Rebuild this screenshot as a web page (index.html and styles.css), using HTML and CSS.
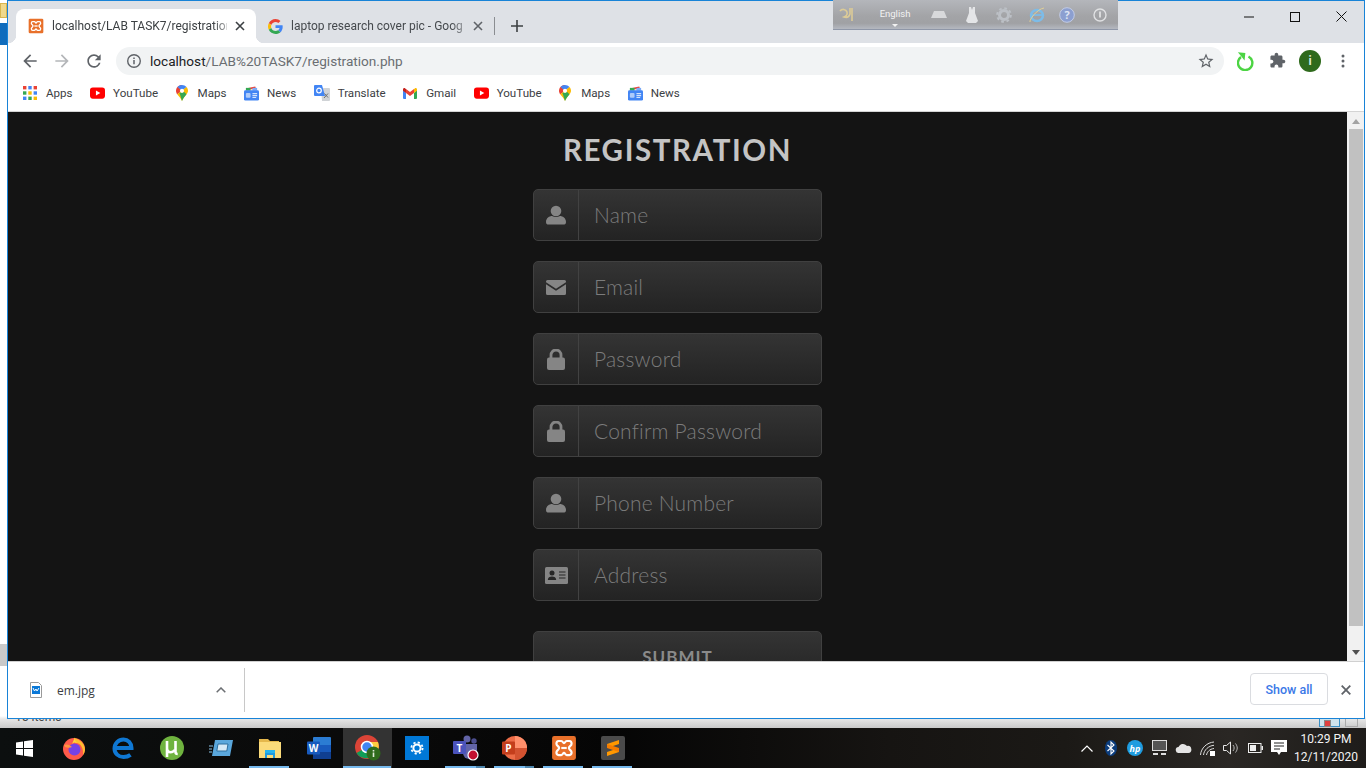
FILE: index.html
```html
<!DOCTYPE html>
<html lang="en">
<head>
<meta charset="utf-8">
<title>Registration</title>
<link rel="stylesheet" href="styles.css">
</head>
<body>
<svg class="defs" width="0" height="0" aria-hidden="true">
  <symbol id="xampp" viewBox="0 0 24 24">
    <rect x="1" y="1" width="22" height="22" rx="2" fill="#e8702a"/>
    <path d="M7 5.500h2.500c1.500 0 1.500 2 2.500 2s1-2 2.500-2H17c1.700 0 2 1.500 2 2.500 0 2-2.500 2.500-2.500 4s2.500 2 2.500 4c0 1-.3 2.500-2 2.500h-2.500c-1.500 0-1.500-2-2.500-2s-1 2-2.500 2H7c-1.700 0-2-1.500-2-2.500 0-2 2.500-2.500 2.500-4S5 10 5 8c0-1 .3-2.500 2-2.500z" fill="none" stroke="#fff" stroke-width="2"/>
    <rect x="9.500" y="11" width="5" height="2" fill="#fff"/>
  </symbol>
  <symbol id="google" viewBox="0 0 48 48">
    <path fill="#EA4335" d="M24 9.500c3.540 0 6.710 1.220 9.210 3.600l6.850-6.850C35.900 2.380 30.470 0 24 0 14.620 0 6.510 5.380 2.560 13.220l7.980 6.190C12.430 13.720 17.740 9.500 24 9.500z"/>
    <path fill="#4285F4" d="M46.980 24.550c0-1.570-.15-3.090-.38-4.550H24v9.020h12.940c-.58 2.960-2.260 5.480-4.780 7.180l7.730 6c4.510-4.180 7.090-10.360 7.090-17.65z"/>
    <path fill="#FBBC05" d="M10.530 28.590c-.48-1.450-.76-2.990-.76-4.590s.27-3.140.76-4.590l-7.980-6.190C.92 16.460 0 20.120 0 24c0 3.880.92 7.540 2.560 10.780l7.970-6.190z"/>
    <path fill="#34A853" d="M24 48c6.480 0 11.930-2.130 15.890-5.810l-7.730-6c-2.150 1.450-4.920 2.300-8.160 2.300-6.260 0-11.570-4.220-13.470-9.910l-7.980 6.190C6.510 42.620 14.620 48 24 48z"/>
  </symbol>
  <symbol id="youtube" viewBox="0 0 16 12">
    <rect width="16" height="12" rx="3" fill="#f00"/>
    <path d="M6.300 3.300L11 6 6.300 8.700z" fill="#fff"/>
  </symbol>
  <symbol id="maps" viewBox="0 0 12 16">
    <path d="M6 0C2.700 0 0 2.600 0 5.800c0 1.300.5 2.500 1.200 3.400L6 6z" fill="#e94235"/>
    <path d="M6 0c-1.800 0-3.400.8-4.500 2L6 6l4.500-4C9.400.8 7.800 0 6 0z" fill="#4285f4"/>
    <path d="M10.500 2L1.200 9.200C2.700 11.300 4.800 13 6 16c1.200-3 3-4.800 4.500-6.700.9-1 1.500-2.200 1.500-3.500 0-1.500-.6-2.800-1.500-3.800z" fill="#fbbc04"/>
    <path d="M3.400 7.700L6 16c1.200-3 3-4.800 4.500-6.700L8.200 7z" fill="#34a853"/>
    <circle cx="6" cy="5.800" r="2.100" fill="#fff"/>
  </symbol>
  <symbol id="news" viewBox="0 0 16 15">
    <path d="M3 2l9-2 1 3H3z" fill="#e8453c"/>
    <path d="M9 1.500h5v3H9z" fill="#7baaf7"/>
    <path d="M2 1.500h5v3H2z" fill="#34a853"/>
    <rect y="4" width="16" height="11" rx="1.500" fill="#4285f4"/>
    <rect x="2" y="7" width="5" height="5" rx="1" fill="#aecbfa"/>
    <path d="M9 7h5v1.300H9zM9 9.200h5v1.300H9zM9 11.200h4v1H9z" fill="#d2e3fc"/>
  </symbol>
  <symbol id="translate" viewBox="0 0 16 16">
    <path d="M7 3h8a1 1 0 011 1v11a1 1 0 01-1 1H8z" fill="#d0d3d6"/>
    <path d="M1 0h7l3 11H1a1 1 0 01-1-1V1a1 1 0 011-1z" fill="#4285f4"/>
    <circle cx="5" cy="5.500" r="2.300" fill="none" stroke="#fff" stroke-width="1.200"/>
    <path d="M10.500 8.500l3.500 4M14 8.500l-4 4.500" stroke="#6b6f73" stroke-width="1"/>
  </symbol>
  <symbol id="gmail" viewBox="0 0 14 11">
    <path d="M0 1.500v8.500a1 1 0 001 1h2V5z" fill="#4285f4"/>
    <path d="M14 1.500v8.500a1 1 0 01-1 1h-2V5z" fill="#34a853"/>
    <path d="M3 5V1L7 4l4-3v4L7 8z" fill="#ea4335"/>
    <path d="M0 1.500C0 .3 1.300-.3 2.200.4L3 1v4L0 2.800z" fill="#c5221f"/>
    <path d="M14 1.500c0-1.200-1.300-1.800-2.200-1.100L11 1v4l3-2.200z" fill="#fbbc04"/>
  </symbol>
  <symbol id="user" viewBox="0 0 20 20">
    <circle cx="10" cy="6" r="5.300" fill="#858585"/>
    <path d="M0 17c0-4 3.500-6 6-6 1.300.6 2.600.9 4 .9s2.700-.3 4-.9c2.500 0 6 2 6 6 0 2-1 2.500-2.500 2.500h-15C1 19.500 0 19 0 17z" fill="#858585"/>
  </symbol>
  <symbol id="lock" viewBox="0 0 18 21">
    <path d="M4 9V6a5 5 0 0110 0v3" fill="none" stroke="#858585" stroke-width="2.800"/>
    <rect y="8.500" width="18" height="12.500" rx="2" fill="#858585"/>
  </symbol>
</svg>

<div class="screen">
  <div class="desktop">
    <div class="back-window">
      <span class="back-folder"></span>
      <span class="back-ribbon"></span>
      <span class="back-grey"></span>
      <span class="back-status">15 items</span>
      <span class="back-view back-view-on"></span>
      <span class="back-view back-view-off"></span>
    </div>

    <div class="window">
      <div class="tabstrip">
        <div class="tab tab-active">
          <svg class="fav" width="16" height="16"><use href="#xampp"/></svg>
          <span class="tab-title">localhost/LAB TASK7/registration</span>
          <svg class="tab-x" width="10" height="10" viewBox="0 0 10 10"><path d="M1 1l8 8M9 1L1 9" stroke="#3c4043" stroke-width="1.600"/></svg>
        </div>
        <div class="tab tab-idle">
          <svg class="fav" width="15" height="15"><use href="#google"/></svg>
          <span class="tab-title">laptop research cover pic - Goog</span>
          <svg class="tab-x" width="10" height="10" viewBox="0 0 10 10"><path d="M1 1l8 8M9 1L1 9" stroke="#5f6368" stroke-width="1.600"/></svg>
        </div>
        <span class="tab-sep"></span>
        <svg class="tab-new" width="12" height="12" viewBox="0 0 12 12"><path d="M6 0v12M0 6h12" stroke="#3c4043" stroke-width="1.600"/></svg>
        <div class="win-controls">
          <svg width="10" height="10" viewBox="0 0 10 10"><path d="M0 5h10" stroke="#111" stroke-width="1"/></svg>
          <svg width="10" height="10" viewBox="0 0 10 10"><rect x=".5" y=".5" width="9" height="9" fill="none" stroke="#111" stroke-width="1"/></svg>
          <svg width="11" height="11" viewBox="0 0 11 11"><path d="M.5.500l10 10M10.500.500l-10 10" stroke="#111" stroke-width="1"/></svg>
        </div>
      </div>

      <div class="toolbar">
        <svg class="tool" width="20" height="20" viewBox="0 0 24 24"><path fill="#5f6368" d="M20 11H7.830l5.590-5.590L12 4l-8 8 8 8 1.410-1.410L7.830 13H20v-2z"/></svg>
        <svg class="tool" width="20" height="20" viewBox="0 0 24 24"><path fill="#b4b6b9" d="M12 4l-1.410 1.410L16.170 11H4v2h12.170l-5.580 5.590L12 20l8-8z"/></svg>
        <svg class="tool" width="20" height="20" viewBox="0 0 24 24"><path fill="#5f6368" d="M17.650 6.350A7.958 7.958 0 0012 4c-4.420 0-7.990 3.580-7.990 8s3.570 8 7.990 8c3.730 0 6.840-2.550 7.730-6h-2.080A5.990 5.990 0 0112 18c-3.310 0-6-2.690-6-6s2.690-6 6-6c1.660 0 3.140.69 4.220 1.780L13 11h7V4l-2.350 2.350z"/></svg>
        <div class="omnibox">
          <svg class="info" width="16" height="16" viewBox="0 0 16 16"><circle cx="8" cy="8" r="6.300" fill="none" stroke="#5f6368" stroke-width="1.400"/><path d="M8 7v4.300M8 4.500v1.400" stroke="#5f6368" stroke-width="1.500"/></svg>
          <span class="url"><span class="url-host">localhost</span>/LAB%20TASK7/registration.php</span>
          <svg class="star" width="18" height="18" viewBox="0 0 24 24"><path fill="#5f6368" d="M22 9.240l-7.190-.62L12 2 9.190 8.630 2 9.240l5.460 4.730L5.820 21 12 17.270 18.180 21l-1.630-7.030L22 9.240zM12 15.400l-3.760 2.270 1-4.280-3.320-2.880 4.380-.38L12 6.100l1.710 4.040 4.380.38-3.320 2.880 1 4.280L12 15.400z"/></svg>
        </div>
        <svg class="ext-sync" width="18" height="20" viewBox="0 0 18 20"><path d="M4 6a7.200 7.200 0 107.500-.5" fill="none" stroke="#4cd443" stroke-width="2.400"/><path d="M.5 1.500h7.500v7.500z" fill="#4cd443" transform="rotate(6 4 5)"/></svg>
        <svg class="ext-puzzle" width="17" height="17" viewBox="0 0 24 24"><path fill="#5f6368" d="M20.500 11H19V7c0-1.100-.9-2-2-2h-4V3.500C13 2.120 11.880 1 10.500 1S8 2.120 8 3.500V5H4c-1.100 0-1.990.9-1.990 2v3.800H3.500c1.490 0 2.700 1.210 2.700 2.700s-1.210 2.700-2.700 2.700H2V20c0 1.100.9 2 2 2h3.800v-1.500c0-1.490 1.210-2.700 2.700-2.700 1.490 0 2.700 1.210 2.700 2.700V22H17c1.100 0 2-.9 2-2v-4h1.500c1.380 0 2.500-1.120 2.500-2.500S21.880 11 20.500 11z"/></svg>
        <span class="avatar">i</span>
        <svg class="menu" width="4" height="14" viewBox="0 0 4 14"><circle cx="2" cy="2" r="1.500" fill="#5f6368"/><circle cx="2" cy="7" r="1.500" fill="#5f6368"/><circle cx="2" cy="12" r="1.500" fill="#5f6368"/></svg>
      </div>

      <div class="bookmarks">
        <a class="bm bm-apps">
          <svg width="14" height="14" viewBox="0 0 14 14">
            <rect width="3.400" height="3.400" fill="#ea4335"/><rect x="5.300" width="3.400" height="3.400" fill="#4285f4"/><rect x="10.600" width="3.400" height="3.400" fill="#ea4335"/>
            <rect y="5.300" width="3.400" height="3.400" fill="#34a853"/><rect x="5.300" y="5.300" width="3.400" height="3.400" fill="#fbbc04"/><rect x="10.600" y="5.300" width="3.400" height="3.400" fill="#4285f4"/>
            <rect y="10.600" width="3.400" height="3.400" fill="#4285f4"/><rect x="5.300" y="10.600" width="3.400" height="3.400" fill="#34a853"/><rect x="10.600" y="10.600" width="3.400" height="3.400" fill="#fbbc04"/>
          </svg>
          <span>Apps</span>
        </a>
        <a class="bm"><svg width="15" height="12"><use href="#youtube"/></svg><span>YouTube</span></a>
        <a class="bm bm-maps"><svg width="12" height="16"><use href="#maps"/></svg><span>Maps</span></a>
        <a class="bm"><svg width="15" height="15"><use href="#news"/></svg><span>News</span></a>
        <a class="bm"><svg width="16" height="16"><use href="#translate"/></svg><span>Translate</span></a>
        <a class="bm bm-apps"><svg width="14" height="11"><use href="#gmail"/></svg><span>Gmail</span></a>
        <a class="bm"><svg width="15" height="12"><use href="#youtube"/></svg><span>YouTube</span></a>
        <a class="bm bm-maps"><svg width="12" height="16"><use href="#maps"/></svg><span>Maps</span></a>
        <a class="bm"><svg width="15" height="15"><use href="#news"/></svg><span>News</span></a>
      </div>

      <div class="viewport">
        <main class="page">
          <h1 class="title">REGISTRATION</h1>
          <form class="form">
            <div class="field">
              <span class="field-icon"><svg width="20" height="20"><use href="#user"/></svg></span>
              <span class="field-text">Name</span>
            </div>
            <div class="field">
              <span class="field-icon"><svg width="20" height="15" viewBox="0 0 20 15"><path d="M1.500 0h17A1.500 1.500 0 0120 1.500v.7l-10 6.500L0 2.200v-.7A1.500 1.500 0 011.500 0z" fill="#858585"/><path d="M0 4.200l10 6.500 10-6.500v9.300a1.500 1.500 0 01-1.500 1.500h-17A1.500 1.500 0 010 13.500z" fill="#858585"/></svg></span>
              <span class="field-text">Email</span>
            </div>
            <div class="field">
              <span class="field-icon"><svg width="18" height="21"><use href="#lock"/></svg></span>
              <span class="field-text">Password</span>
            </div>
            <div class="field">
              <span class="field-icon"><svg width="18" height="21"><use href="#lock"/></svg></span>
              <span class="field-text">Confirm Password</span>
            </div>
            <div class="field">
              <span class="field-icon"><svg width="20" height="20"><use href="#user"/></svg></span>
              <span class="field-text">Phone Number</span>
            </div>
            <div class="field">
              <span class="field-icon"><svg width="23" height="17" viewBox="0 0 23 17"><rect width="23" height="17" rx="1.500" fill="#858585"/><circle cx="7" cy="6" r="2.500" fill="#262626"/><path d="M2.800 13c0-2.500 1.800-3.500 4.200-3.500s4.200 1 4.200 3.500z" fill="#262626"/><path d="M14 5h6.500M14 8h6.500M14 11h6.500" stroke="#262626" stroke-width="1.200"/></svg></span>
              <span class="field-text">Address</span>
            </div>
            <button class="submit" type="button">SUBMIT</button>
          </form>
        </main>
        <div class="scrollbar">
          <span class="arrow arrow-up"></span>
          <span class="thumb"></span>
          <span class="arrow arrow-down"></span>
        </div>
      </div>

      <div class="shelf">
        <div class="shelf-item">
          <svg width="12" height="16" viewBox="0 0 12 16"><path d="M.5.500h8l3 3v12H.5z" fill="#fff" stroke="#9a9a9a"/><rect x="2" y="4" width="8" height="8" fill="#0a78d7"/><path d="M3 6l1.500 3L6 7l1 2 2-3" fill="none" stroke="#fff" stroke-width="1"/></svg>
          <span class="file-name">em.jpg</span>
          <svg class="file-chev" width="10" height="6" viewBox="0 0 10 6"><path d="M.7 5.300L5 1l4.300 4.300" fill="none" stroke="#6b6e72" stroke-width="1.500"/></svg>
        </div>
        <button class="show-all" type="button">Show all</button>
        <svg class="shelf-x" width="10" height="10" viewBox="0 0 10 10"><path d="M.7.700l8.600 8.600M9.300.700L.7 9.300" stroke="#5f6368" stroke-width="1.800"/></svg>
      </div>
    </div>

    <div class="langbar">
      <svg width="16" height="14" viewBox="0 0 16 14"><path d="M1 3c2-2.500 6-2 7 1 .5 2-.5 4-3 5 3 1 5 0 6-3V0m2 0v13" fill="none" stroke="#dccb97" stroke-width="1.600"/></svg>
      <span class="lang-name">English</span>
      <svg width="16" height="8" viewBox="0 0 16 8"><path d="M3 0h10l3 7H0z" fill="#d8d9db"/></svg>
      <svg width="12" height="16" viewBox="0 0 12 16"><path d="M3 0h2l1 3 1-3h2v6l3 8-2 2H2l-2-2 3-8z" fill="#e4e5e7"/></svg>
      <svg width="16" height="16" viewBox="0 0 16 16"><circle cx="8" cy="8" r="4.500" fill="none" stroke="#bcc0c6" stroke-width="3"/><circle cx="8" cy="8" r="6.800" fill="none" stroke="#bcc0c6" stroke-width="2" stroke-dasharray="2.700 2.650"/></svg>
      <svg width="16" height="16" viewBox="0 0 16 16"><ellipse cx="8" cy="8.500" rx="6" ry="5.500" fill="none" stroke="#7dbce8" stroke-width="2.500"/><path d="M3 8h10" stroke="#7dbce8" stroke-width="1.800"/><path d="M1 15C0 13 8 2 15 1" fill="none" stroke="#e0d096" stroke-width="1"/></svg>
      <svg width="16" height="16" viewBox="0 0 16 16"><circle cx="8" cy="8" r="7.300" fill="#8c9fd0" stroke="#c2cce6"/><text x="8" y="12" class="lang-q">?</text></svg>
      <svg width="14" height="14" viewBox="0 0 14 14"><circle cx="7" cy="7" r="6" fill="none" stroke="#e0e1e3" stroke-width="1.400"/><path d="M7 3.500v6" stroke="#e0e1e3" stroke-width="1.800"/></svg>
      <span class="lang-caret"></span>
    </div>
  </div>

  <footer class="taskbar">
    <div class="start">
      <svg width="17" height="17" viewBox="0 0 17 17"><path d="M0 2.400L7 1.400v6.600H0zM8 1.300L17 0v8H8zM0 9h7v6.600L0 14.600zM8 9h9v8l-9-1.300z" fill="#fff"/></svg>
    </div>
    <div class="task">
      <svg width="24" height="24" viewBox="0 0 24 24"><circle cx="12" cy="13" r="11" fill="#ff5a4a"/><path d="M12 2c5 1 11 5 11 12a11 11 0 01-2 5C22 12 18 6 13 7z" fill="#ffbd2e"/><path d="M13 1c-1 3 1 5 3 6-3-1-5 0-6 1z" fill="#ffd43a"/><circle cx="12.500" cy="13.500" r="6" fill="#7542e5"/><path d="M2 9c2-1 5-1 8 2-2 1-5 1-7 0z" fill="#ff9640"/></svg>
    </div>
    <div class="task">
      <svg width="22" height="22" viewBox="0 0 22 22"><path d="M3.500 11h16c0-5-3.500-8.500-8-8.500-5 0-9 4-9 9 0 5 4 8.500 9 8.500 3 0 5-.7 7-2.200" fill="none" stroke="#0f78d4" stroke-width="4"/></svg>
    </div>
    <div class="task">
      <svg width="24" height="24" viewBox="0 0 24 24"><circle cx="12" cy="12" r="12" fill="#6fb33f"/><path d="M7 5v16M7 6v6c0 3 1.800 4.200 3.800 4.200s3-1 4-2.200M15.500 5v11c0 1.400.8 2 2.200 2" fill="none" stroke="#fff" stroke-width="2.600"/></svg>
    </div>
    <div class="task">
      <svg width="24" height="18" viewBox="0 0 24 18"><path d="M6 1h18l-3 16H3z" fill="#5aa7dc"/><path d="M9 5h10l-1.200 7H7.800z" fill="#d5e9f6" stroke="#2c6e9e"/><path d="M0 7h4M0 10h3M0 13h3" stroke="#8cc4e8"/></svg>
    </div>
    <div class="task task-open">
      <svg width="22" height="20" viewBox="0 0 22 20"><path d="M0 1h9l2 2h9v3H0z" fill="#e5b84c"/><rect y="4" width="22" height="16" fill="#fbdb7a"/><path d="M6 15h10v5h-2v-3H8v3H6z" fill="#1f9be0"/><rect x="6" y="12" width="10" height="3" fill="#27b4ec"/></svg>
    </div>
    <div class="task">
      <svg width="24" height="22" viewBox="0 0 24 22"><rect x="6" y="0" width="18" height="22" rx="1" fill="#2b7cd3"/><rect x="6" y="15" width="18" height="7" fill="#103f91"/><rect x="6" y="8" width="18" height="7" fill="#185abd"/><rect y="4.500" width="13" height="13" rx="1" fill="#185abd"/><text x="6.500" y="15" class="word-w">W</text></svg>
    </div>
    <div class="task task-active">
      <svg width="26" height="26" viewBox="0 0 26 26"><circle cx="12" cy="12" r="12" fill="#db4437"/><path d="M12 12L1.600 18a12 12 0 0017 3z" fill="#0f9d58"/><path d="M12 12l6.600 9A12 12 0 0023 7H12z" fill="#ffcd40"/><circle cx="12" cy="12" r="5.500" fill="#4285f4" stroke="#fff" stroke-width="1.500"/><circle cx="18.500" cy="18.500" r="7" fill="#2f6a1c"/><path d="M18.500 15v1.400M18.500 17.500v4.500" stroke="#dfe9d8" stroke-width="1.600"/></svg>
    </div>
    <div class="task">
      <svg width="24" height="24" viewBox="0 0 24 24"><rect width="24" height="24" fill="#0078d7"/><circle cx="12" cy="12" r="3.600" fill="none" stroke="#fff" stroke-width="2"/><circle cx="12" cy="12" r="5.600" fill="none" stroke="#fff" stroke-width="1.800" stroke-dasharray="2.200 2.200"/></svg>
    </div>
    <div class="task task-open task-stack">
      <svg width="26" height="26" viewBox="0 0 26 26"><circle cx="14" cy="4" r="3.500" fill="#6264a7"/><circle cx="21" cy="6" r="2.700" fill="#4b4d8e"/><path d="M10 9h14v9a6 6 0 01-6 6h-2a6 6 0 01-6-6z" fill="#6264a7"/><rect y="6" width="13" height="13" rx="1" fill="#4b53bc"/><text x="6.500" y="16.500" class="teams-t">T</text><circle cx="20" cy="20" r="5" fill="#c4102f" stroke="#fff" stroke-width="1.200"/></svg>
    </div>
    <div class="task task-open task-stack">
      <svg width="25" height="24" viewBox="0 0 25 24"><circle cx="13" cy="12" r="12" fill="#ed6c47"/><path d="M13 0a12 12 0 0112 12H13z" fill="#ff8f6b"/><path d="M13 12h12a12 12 0 01-12 12z" fill="#d35230"/><rect y="5.500" width="13" height="13" rx="1" fill="#c43e1c"/><text x="6.500" y="16" class="ppt-p">P</text></svg>
    </div>
    <div class="task task-open">
      <svg width="26" height="26"><use href="#xampp"/></svg>
    </div>
    <div class="task task-open">
      <svg width="24" height="24" viewBox="0 0 24 24"><rect width="24" height="24" rx="2" fill="#4a4a4a"/><path d="M18 4L6 8v4l12-4zM18 12L6 16v4l12-4z" fill="#ff9800"/><path d="M6 8l12 4v4L6 12z" fill="#f57c00"/></svg>
    </div>

    <div class="tray">
      <span class="tray-ico"><svg width="12" height="7" viewBox="0 0 12 7"><path d="M.5 6.500L6 1l5.500 5.500" fill="none" stroke="#fff" stroke-width="1.200"/></svg></span>
      <span class="tray-ico"><svg width="12" height="16" viewBox="0 0 12 16"><ellipse cx="6" cy="8" rx="6" ry="8" fill="#0b3c7c"/><path d="M2.500 5l6.500 6-3 3V2l3 3-6.500 6" fill="none" stroke="#fff" stroke-width="1.100"/></svg></span>
      <span class="tray-ico"><svg width="16" height="16" viewBox="0 0 16 16"><circle cx="8" cy="8" r="8" fill="#1e9ce0"/><text x="8" y="11.500" class="hp">hp</text></svg></span>
      <span class="tray-ico"><svg width="15" height="16" viewBox="0 0 15 16"><rect x=".5" y=".5" width="14" height="10" fill="#555" stroke="#ddd"/><path d="M1 13h5v2H1zM9 13h5v2H9z" fill="#ddd"/></svg></span>
      <span class="tray-ico"><svg width="17" height="10" viewBox="0 0 17 10"><path d="M4 10a3 3 0 01-.5-6A5 5 0 0112 3a3.500 3.500 0 011.500 7z" fill="#e4e4e4"/></svg></span>
      <span class="tray-ico"><svg width="15" height="15" viewBox="0 0 15 15"><path d="M.5 14C1 7 7 1.500 14 1M3.500 14C4 9 8.500 4.800 14 4.300M6.500 14c.5-3 3-6 7.500-6.500" fill="none" stroke="#ddd" stroke-width="1"/><rect x="10" y="10" width="5" height="5" fill="#fff"/></svg></span>
      <span class="tray-ico"><svg width="16" height="14" viewBox="0 0 16 14"><path d="M.5 4.500h3L7.500 1v12l-4-3.500h-3z" fill="none" stroke="#e8e8e8"/><path d="M10 4c1.500 2 1.500 4 0 6M12.500 2.500c2.300 3 2.300 6 0 9" fill="none" stroke="#bbb"/></svg></span>
      <span class="tray-ico"><svg width="15" height="10" viewBox="0 0 15 10"><rect x=".5" y=".5" width="12.500" height="9" fill="none" stroke="#eee"/><rect x="2" y="2" width="6" height="6" fill="#eee"/><rect x="13.500" y="3" width="1.500" height="4" fill="#eee"/></svg></span>
      <span class="tray-ico"><svg width="16" height="16" viewBox="0 0 16 16"><path d="M0 0h16v12h-6l-2 3-2-3H0z" fill="#fff"/><path d="M3 3h10M3 6h10M3 9h6" stroke="#222"/></svg></span>
      <div class="clock"><span>10:29 PM</span><span>12/11/2020</span></div>
    </div>
  </footer>
</div>
</body>
</html>
```

FILE: styles.css
```css
* { box-sizing: border-box; }
html, body { margin: 0; padding: 0; height: 100%; overflow: hidden; }
body { font-family: Roboto, "Open Sans", "Liberation Sans", sans-serif; }
.defs { display: block; height: 0; }

.screen { width: 1366px; height: 768px; display: flex; flex-direction: column; }
.desktop { position: relative; height: 728px; background: #f0f0f0; overflow: hidden; }

/* window behind the browser */
.back-window { position: absolute; inset: 0; background: linear-gradient(#fff, #fff 716px, #e6e6e6 719px, #c9c9c9 728px); }
.back-folder { position: absolute; left: 0; top: 3px; width: 7px; height: 15px; background: #f0d98c; border: 1px solid #d9b64f; }
.back-ribbon { position: absolute; left: 0; top: 23px; width: 7px; height: 22px; background: #0f6cbd; }
.back-grey { position: absolute; left: 0; top: 644px; width: 7px; height: 22px; background: #c9c9c9; }
.back-status { position: absolute; left: 15px; top: 709px; font-size: 12px; line-height: 16px; color: #444; }
.back-view { position: absolute; top: 712px; height: 15px; }
.back-view-on { left: 1319px; width: 21px; background: #cfe3ec; border: 1px solid #3a8fc4; }
.back-view-on::after { content: ""; position: absolute; left: 4px; top: 7px; width: 5px; height: 5px; border: 1px solid #888; background: #e04040; }
.back-view-off { left: 1345px; width: 13px; border: 1px solid #aaa; }

/* browser window */
.window { position: absolute; left: 7px; top: 0; width: 1358px; height: 719px; border: 1px solid #1883d7; background: #fff; display: flex; flex-direction: column; }

.tabstrip { position: relative; height: 42px; flex: none; background: #dee1e6; display: flex; align-items: flex-end; padding-left: 8px; }
.tab { width: 240px; height: 34px; display: flex; align-items: center; padding: 0 11px 0 12px; font-size: 12px; color: #45494d; }
.tab-idle { width: 238px; padding-right: 11px; }
.tab-active { position: relative; background: #fff; border-radius: 8px 8px 0 0; color: #3c4043; }
.tab-active::before, .tab-active::after { content: ""; position: absolute; bottom: 0; width: 8px; height: 8px; }
.tab-active::before { left: -8px; background: radial-gradient(circle at 0 0, transparent 8px, #fff 8.500px); }
.tab-active::after { right: -8px; background: radial-gradient(circle at 100% 0, transparent 8px, #fff 8.500px); }
.fav { flex: none; margin-right: 8px; }
.tab-title { flex: 1; min-width: 0; white-space: nowrap; -webkit-mask-image: linear-gradient(90deg, #000 92%, rgba(0,0,0,.4)); mask-image: linear-gradient(90deg, #000 92%, rgba(0,0,0,.4)); }
.tab-x { flex: none; margin-left: 8px; }
.tab-sep { width: 1px; height: 18px; background: #8a8d91; margin: 0 0 8px 0; }
.tab-new { margin: 0 0 11px 16px; }
.win-controls { margin-left: auto; align-self: flex-start; display: flex; align-items: center; gap: 36px; padding: 10px 17px 0 0; }

.toolbar { height: 35px; flex: none; background: #fff; display: flex; align-items: center; padding: 0 0 0 12px; }
.tool { margin-right: 12px; flex: none; }
.omnibox { width: 1108px; height: 28px; margin-left: 0; background: #f1f3f4; border-radius: 14px; display: flex; align-items: center; padding: 0 9px 0 10px; }
.info { flex: none; margin-right: 8px; }
.url { flex: 1; font-size: 13.600px; color: #6a6e72; white-space: nowrap; }
.url-host { color: #202124; }
.star { flex: none; }
.ext-sync { margin-left: 13px; flex: none; }
.ext-puzzle { margin-left: 14px; flex: none; }
.avatar { width: 22px; height: 22px; margin-left: 13px; border-radius: 50%; background: #2f6a1c; color: #dfe9d8; font-size: 12px; font-weight: 700; display: flex; align-items: center; justify-content: center; flex: none; }
.menu { margin-left: 20px; flex: none; }

.bookmarks { height: 34px; flex: none; padding: 0 0 3px 15px; border-bottom: 1px solid #d4d4d4; background: #fff; display: flex; align-items: center; gap: 17.500px; font-size: 11.600px; color: #3c4043; }
.bm { display: flex; align-items: center; gap: 8px; white-space: nowrap; }
.bm-apps { gap: 9px; }
.bm-maps { gap: 10px; }

.viewport { height: 549px; flex: none; display: flex; overflow: hidden; }
.page { flex: 1; min-width: 0; background: #141414; overflow: hidden; padding-top: 18px; display: flex; flex-direction: column; align-items: center; font-family: Lato, "Liberation Sans", sans-serif; }
.title { margin: 0 0 19px; font-size: 29.500px; line-height: 40px; font-weight: 700; letter-spacing: 1.600px; color: #c4c4c4; }
.form { width: 289px; flex: none; display: flex; flex-direction: column; gap: 20px; }
.field { height: 52px; flex: none; display: flex; border: 1px solid #404040; border-radius: 5px; background: linear-gradient(#343434, #232323); }
.field-icon { width: 45px; flex: none; border-right: 1px solid #424242; display: flex; align-items: center; justify-content: center; }
.field-text { padding-left: 15px; font-size: 21px; line-height: 50px; font-weight: 300; letter-spacing: .2px; color: #7c7c7c; white-space: nowrap; }
.submit { height: 52px; flex: none; margin-top: 10px; border: 1px solid #404040; border-radius: 5px; background: linear-gradient(#343434, #232323); font: 700 17px/50px Lato, "Liberation Sans", sans-serif; letter-spacing: 1px; color: #8a8a8a; padding: 0; }

.scrollbar { width: 17px; flex: none; background: #f1f1f1; display: flex; flex-direction: column; align-items: center; padding: 7px 0 6px; }
.thumb { width: 14px; height: 497px; margin-top: 5px; background: #c1c1c1; }
.arrow { width: 0; height: 0; border-left: 4px solid transparent; border-right: 4px solid transparent; }
.arrow-up { border-bottom: 5px solid #a3a3a3; }
.arrow-down { margin-top: auto; border-top: 5px solid #505050; }

.shelf { height: 57px; flex: none; background: #fff; border-top: 1px solid #d0d0d0; display: flex; align-items: center; padding-right: 13px; }
.shelf-item { width: 237px; height: 44px; flex: none; border-right: 1px solid #c8c8c8; display: flex; align-items: center; padding-left: 22px; }
.file-name { margin-left: 15px; font: 12px "Open Sans", sans-serif; color: #3c4043; }
.file-chev { margin-left: auto; margin-right: 18px; }
.show-all { width: 78px; height: 32px; margin: -2px 0 0 auto; padding: 0; background: #fff; border: 1px solid #dadce0; border-radius: 4px; font: 500 12.500px Roboto, sans-serif; color: #3b78e7; }
.shelf-x { margin-left: 13px; flex: none; }

/* language bar */
.langbar { position: absolute; left: 833px; top: 0; width: 285px; height: 30px; background: linear-gradient(#b4b6bb, #a3a4a7 55%, #a0a1a4 80%, #b4b8c0); border-bottom: 1px solid #8f97a8; display: grid; grid-template-columns: 28px 68px 20px 46px 18px 48px 12px 54px; align-items: center; justify-items: center; }
.lang-name { font-size: 9.500px; color: #f2f2f2; padding-bottom: 2px; white-space: nowrap; }
.lang-caret { position: absolute; left: 59px; top: 24px; border-left: 3px solid transparent; border-right: 3px solid transparent; border-top: 3px solid #f2f2f2; }
.lang-q { font: 700 11px "Open Sans", sans-serif; fill: #dfe5f3; text-anchor: middle; }

/* taskbar */
.taskbar { height: 40px; flex: none; display: flex; align-items: stretch; color: #fff; background: linear-gradient(90deg, #0c0f0f, #0a0a0a 25%, #050505 45%, #161412 65%, #1b1916 78%, #2a2724 90%, #1e1c1a 100%); }
.start { width: 49px; flex: none; display: flex; align-items: center; justify-content: center; }
.task { width: 49px; flex: none; display: flex; align-items: center; justify-content: center; position: relative; }
.task-open::after { content: ""; position: absolute; left: 4px; right: 5px; bottom: 0; height: 2px; background: #76b9ed; }
.task-stack::before { content: ""; position: absolute; left: 35px; right: 5px; bottom: 0; height: 2px; background: #4e86ad; z-index: 1; }
.task-active { background: #333; }
.task-active::after { content: ""; position: absolute; left: 0; right: 1px; bottom: 0; height: 2px; background: #76b9ed; }
.word-w, .teams-t, .ppt-p { font: 700 10px "Open Sans", sans-serif; fill: #fff; text-anchor: middle; }
.hp { font: italic 700 9px "Open Sans", sans-serif; fill: #fff; text-anchor: middle; }

.tray { margin-left: auto; display: flex; align-items: center; padding-right: 5px; }
.tray-ico { width: 24px; display: flex; align-items: center; justify-content: center; }
.clock { width: 70px; display: flex; flex-direction: column; align-items: center; font-size: 12px; line-height: 18px; color: #f4f4f4; }
```
